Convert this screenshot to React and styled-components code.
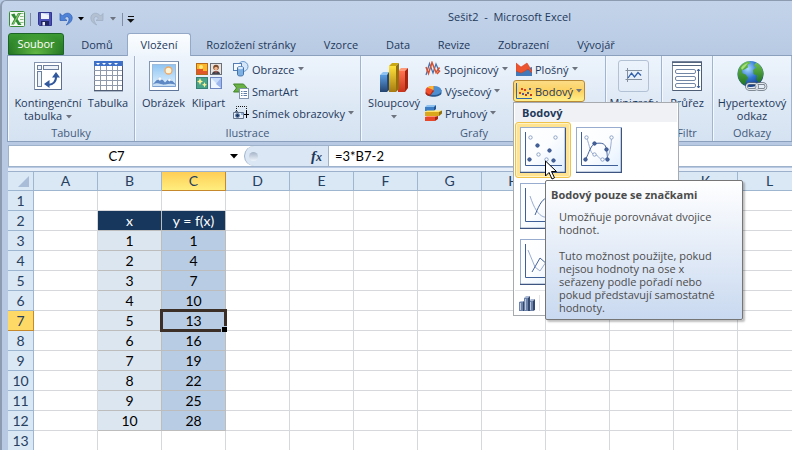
import React from "react";
import styled, { createGlobalStyle, css } from "styled-components";

const GlobalStyle = createGlobalStyle`
  * { box-sizing: border-box; }
  html, body { margin: 0; overflow: hidden; background: #b8cbe4; }
  body, button, input { font-family: "Open Sans", "Noto Sans", sans-serif; font-size: 11px; color: #1e395b; }
  button { border: 0; padding: 0; background: none; }
  svg { display: block; flex: none; }
`;

/* ---------- window ---------- */
const Window = styled.div`
  display: flex;
  flex-direction: column;
  min-height: 100vh;
  padding-left: 5px;
  background: linear-gradient(#c3d4ea, #b8cae3 55px);
  border-top: 1px solid #8d9bb0;
  border-left: 2px solid #8d9bb0;
  border-top-left-radius: 6px;
`;

const TitleBar = styled.header`
  display: grid;
  grid-template-columns: 220px 1fr;
  align-items: center;
  height: 32px;
`;

const QuickAccess = styled.div`
  display: flex;
  align-items: center;
  padding: 4px 0 0 2px;
`;

const QuickButton = styled.button`
  display: flex;
  align-items: center;
  justify-content: center;
  width: ${(p) => p.$w}px;
  height: 20px;
`;

const Divider = styled.span`
  width: 1px;
  height: 13px;
  background: #7f8ea3;
`;

const Title = styled.h1`
  margin: 0;
  padding-bottom: 2px;
  text-align: center;
  font-size: 11px;
  font-weight: 400;
  white-space: pre;
`;

/* ---------- ribbon ---------- */
const Tabs = styled.nav`
  display: flex;
  height: 22px;
  padding-left: 1px;
`;

const Tab = styled.button`
  flex: none;
  width: ${(p) => p.$w}px;
  height: 23px;
  line-height: 22px;
  white-space: nowrap;
  ${(p) =>
    p.$active &&
    css`
      position: relative;
      background: linear-gradient(#fbfdff, #eef5fc);
      border: 1px solid #93a9c7;
      border-bottom: 0;
      border-radius: 3px 3px 0 0;
      line-height: 20px;
    `}
`;

const FileTab = styled(Tab)`
  height: 22px;
  margin-right: 3px;
  color: #fff;
  background: radial-gradient(ellipse at 50% 100%, #63b944, transparent 75%), linear-gradient(#3c9a33, #1f7020);
  border: 1px solid #1c6427;
  border-radius: 3px 3px 0 0;
  line-height: 20px;
`;

const Ribbon = styled.div`
  display: flex;
  height: 87px;
  border: 1px solid #8ba0bd;
  border-right: 0;
  background: linear-gradient(#edf4fc, #dde8f5 60%, #d5e2f1);
`;

const Group = styled.section`
  display: flex;
  flex-direction: column;
  flex: none;
  width: ${(p) => p.$w}px;
  border-right: 1px solid #a2b5d0;
  box-shadow: inset 1px 0 #f4f9ff;
`;

const GroupBody = styled.div`
  display: flex;
  justify-content: ${(p) => (p.$center ? "center" : "flex-start")};
  height: 69px;
  padding-left: ${(p) => (p.$center ? 0 : p.$pad)}px;
`;

const GroupLabel = styled.h2`
  margin: 0;
  padding-right: ${(p) => p.$launcher || 0}px;
  font-size: 11px;
  font-weight: 400;
  line-height: 16px;
  text-align: center;
  color: #445b7c;
`;

const LargeButton = styled.button`
  display: flex;
  flex-direction: column;
  align-items: center;
  flex: none;
  gap: 4px;
  width: ${(p) => p.$w}px;
  padding-top: 4px;
  line-height: 13px;
  white-space: nowrap;
`;

const LabelLines = styled.span`
  white-space: pre;
  text-align: center;
  svg {
    display: inline-block;
    margin-left: ${(p) => (p.$alone ? 0 : 4)}px;
    vertical-align: middle;
  }
`;

const Stack = styled.div`
  display: flex;
  flex-direction: column;
  align-items: flex-start;
  padding-top: 2px;
  width: ${(p) => p.$w}px;
`;

const SmallButton = styled.button`
  display: flex;
  align-items: center;
  gap: 3px;
  height: 22px;
  padding: 0 2px;
  white-space: nowrap;
  border: 1px solid transparent;
  border-radius: 3px;
  ${(p) =>
    p.$open &&
    css`
      background: linear-gradient(#fbdc86, #fdd160 50%, #fff08b);
      border-color: #b88a35;
    `}
`;

const SparkFrame = styled.span`
  display: flex;
  align-items: center;
  justify-content: center;
  width: 31px;
  height: 32px;
  border: 1px solid #b3c1d4;
  border-radius: 3px;
`;

/* ---------- scatter menu ---------- */
const MenuAnchor = styled.div`
  position: relative;
`;

const Menu = styled.div`
  position: absolute;
  z-index: 5;
  top: 22px;
  left: 0;
  width: 166px;
  border: 1px solid #a7abb0;
  background: #fff;
`;

const MenuTitle = styled.h3`
  margin: 0 1px;
  padding-left: 7px;
  background: #f0f1f5;
  font-size: 11px;
  line-height: 19px;
`;

const Gallery = styled.div`
  display: grid;
  grid-template-columns: 56px 56px;
  padding-left: 1px;
`;

const GalleryItem = styled.button`
  display: flex;
  align-items: center;
  justify-content: center;
  height: 56px;
  border-radius: 3px;
  ${(p) =>
    p.$hot &&
    css`
      border: 1px solid #efc24c;
      background: #ffe391;
      box-shadow: inset 0 0 0 1px #fff3c4;
    `}
`;

const MenuFooter = styled.div`
  display: flex;
  align-items: center;
  height: 25px;
  padding-left: 4px;
  margin: 0 1px;
  border-top: 1px solid #e2e4e7;
`;

const FooterIcon = styled.span`
  padding-right: 4px;
  border-right: 1px solid #e2e4e7;
`;

const Pointer = styled.svg`
  position: absolute;
  z-index: 7;
  top: 57px;
  left: 31px;
`;

const Tooltip = styled.div`
  position: absolute;
  z-index: 6;
  top: 77px;
  left: 31px;
  width: 198px;
  padding: 7px 6px 5px 5px;
  border: 1px solid #767676;
  border-radius: 2px;
  background: linear-gradient(#fff, #c9d9f0);
  box-shadow: 2px 2px 2px rgba(0, 0, 0, 0.25);
  color: #4c4c4c;
  line-height: 13px;
`;

const TipTitle = styled.strong`
  display: block;
  margin-bottom: 9px;
  white-space: nowrap;
`;

const TipText = styled.p`
  margin: 0 0 13px;
  padding-left: 8px;
  white-space: pre-line;
  &:last-child { margin-bottom: 0; }
`;

/* ---------- formula bar ---------- */
const FormulaBar = styled.div`
  display: flex;
  height: 22px;
  margin: 3px 0 0 1px;
  border: 1px solid #9fb2cc;
  border-right: 0;
  background: #fff;
`;

const NameBox = styled.label`
  display: flex;
  align-items: center;
  width: 229px;
  background: #fff;
`;

const FieldInput = styled.input`
  flex: 1;
  min-width: 0;
  height: 20px;
  border: 0;
  outline: 0;
  padding: 0 6px;
  background: transparent;
  color: #000;
  font-family: Lato, sans-serif;
  font-size: 13px;
`;

const NameInput = styled(FieldInput)`
  padding-left: 0;
  text-align: center;
`;

const FunctionBar = styled.div`
  display: flex;
  align-items: center;
  justify-content: space-between;
  width: 85px;
  margin-left: 6px;
  padding: 0 6px 0 4px;
  border: 1px solid #9fb2cc;
  border-width: 0 1px 0 1px;
  border-radius: 10px 0 0 10px;
  background: #dbe7f4;
`;

const Grip = styled.span`
  width: 9px;
  height: 9px;
  border-radius: 5px;
  background: linear-gradient(#a5b4c8, #eef4fb);
`;

const FxButton = styled.button`
  font-family: "Liberation Serif", serif;
  font-size: 15px;
  font-style: italic;
  font-weight: 700;
  line-height: 18px;
`;

const Sub = styled.span`
  font-size: 12px;
`;

/* ---------- sheet ---------- */
const SheetArea = styled.main`
  flex: 1;
  margin: 1px 0 0 1px;
  padding-top: 3px;
  overflow: hidden;
  background: #e9f0f9;
`;

const Sheet = styled.table`
  table-layout: fixed;
  width: 794px;
  border-collapse: separate;
  border-spacing: 0;
  border-top: 1px solid #9eb1cc;
  background: #fff;
  font-family: Lato, sans-serif;
  font-size: 14px;
  line-height: 18px;
  text-align: center;
`;

const Col = styled.col`
  width: ${(p) => p.$w}px;
`;

const HeadCell = styled.th`
  height: ${(p) => (p.$top ? 19 : 20)}px;
  padding: 0;
  font-weight: 400;
  color: #26405f;
  background: ${(p) => (p.$on ? (p.$top ? "linear-gradient(#ffce56, #ffee7e)" : "#ffd965") : "#dae7f5")};
  border: 0 solid ${(p) => (p.$on ? "#c68a2c" : "#9eb6d0")};
  border-width: 0 1px 1px 0;
`;

const Corner = styled(HeadCell)`
  svg { margin: 0 0 0 10px; }
`;

const Cell = styled.td`
  position: relative;
  height: 20px;
  padding: 0;
  color: ${(p) => (p.$kind === "head" ? "#fff" : "#000")};
  background: ${(p) => ({ head: "#17375d", light: "#dce6f1", dark: "#b8cce4" })[p.$kind] || "#fff"};
  border: 0 solid ${(p) => (p.$kind ? "#bdbdbd" : "#d6d8db")};
  border-width: 0 1px 1px 0;
`;

const Selection = styled.span`
  position: absolute;
  z-index: 1;
  inset: -2px;
  border: 3px solid #3b2f28;
  &::after {
    content: "";
    position: absolute;
    right: -3px;
    bottom: -3px;
    width: 5px;
    height: 5px;
    background: #000;
    border: solid #b8cce4;
    border-width: 1px 0 0 1px;
  }
`;

/* ---------- icons ---------- */
const Arrow = ({ dark }) => (
  <svg width="6" height="4" viewBox="0 0 6 4" aria-hidden="true">
    <path d="M0 0h6L3 3.6z" fill={dark ? "#000" : "#6d747f"} />
  </svg>
);

const BigArrow = () => (
  <svg width="8" height="5" viewBox="0 0 8 5" aria-hidden="true">
    <path d="M0 0h8L4 4.5z" fill="#000" />
  </svg>
);

const ExcelIcon = () => (
  <svg width="16" height="16" viewBox="0 0 16 16">
    <rect x=".5" y=".5" width="15" height="15" rx="1" fill="#f4faf2" stroke="#3b8a3c" />
    <path d="M11 2.500h3.500M11 5.500h3.500M11 8.500h3.500M11 11.500h3.500" stroke="#8bbf85" />
    <path d="M2 3.500L5.500 2.500 7 5.700 9 2h3L8.500 8l4 6H9L6.800 10.300 5 13.500H2.200L5.300 8z" fill="#2f8a35" />
    <path d="M9.500 2.500h1.500L5 12.800H3.600z" fill="#86c56a" />
  </svg>
);

const SaveIcon = () => (
  <svg width="14" height="14" viewBox="0 0 14 14">
    <path d="M.5.5h13v13h-12l-1-1z" fill="#4a4fb5" stroke="#32378e" />
    <rect x="3" y="1" width="8" height="6" fill="#eef3fc" />
    <path d="M3 1h8v2z" fill="#bccdf0" />
    <rect x="3" y="9" width="8" height="4.500" fill="#20255e" />
    <rect x="4.500" y="10" width="2.500" height="3.500" fill="#e4eaf8" />
  </svg>
);

const UndoIcon = ({ redo }) => (
  <svg width="14" height="14" viewBox="0 0 14 14">
    <g transform={redo ? "translate(14 0) scale(-1 1)" : undefined}>
      <path
        d="M1 1.500v7h7L5.600 6.200c1.500-2.200 4.100-1.900 4.400.6.200 2-.9 4-2.700 6.200 3.700-1.600 6-4.200 5.900-7.400C12.600.6 6.800-.4 3.400 4z"
        fill={redo ? "#b3c0d2" : "#4f83d8"}
        stroke={redo ? "#9dacc2" : "#2d5db5"}
        strokeWidth=".7"
      />
    </g>
  </svg>
);

const CustomizeIcon = () => (
  <svg width="8" height="7" viewBox="0 0 8 7">
    <path d="M1 .5h6" stroke="#111" />
    <path d="M0 3h7.500L3.700 6.700z" fill="#111" />
  </svg>
);

const PivotIcon = () => (
  <svg width="32" height="32" viewBox="0 0 32 32">
    <rect x="2.500" y="2.500" width="27" height="27" fill="#fff" stroke="#8494b0" />
    <path d="M3 29.500h26.500V3" fill="none" stroke="#5c6f92" />
    <g fill="#eef3fa" stroke="#6d7f9e">
      <rect x="5.500" y="5.500" width="4" height="4" />
      <rect x="11.500" y="5.500" width="15" height="4" />
      <rect x="5.500" y="11.500" width="4" height="15" />
    </g>
    <path d="M15 24.500c6 1 9.500-3 9-9" fill="none" stroke="#31579c" strokeWidth="2" />
    <path d="M24 12l4 5.500h-8zM12 24l5.500-4v8z" fill="#31579c" />
  </svg>
);

const TableIcon = () => (
  <svg width="32" height="32" viewBox="0 0 32 32">
    <rect x="2.500" y="2" width="28" height="29" fill="#fff" stroke="#75839a" />
    <rect x="2" y="1" width="29" height="5" fill="#3e70c8" />
    <path d="M4 3h4l-2 2zM10 3h4l-2 2zM16 3h4l-2 2zM22 3h4l-2 2z" fill="#fff" />
    <path d="M8.500 6v25M14.500 6v25M20.500 6v25M25.500 6v25M2 10.500h29M2 15.500h29M2 20.500h29M2 25.500h29" stroke="#8f9bad" />
    <path d="M2 30.500h28.500V6" fill="none" stroke="#4f5c73" />
  </svg>
);

const PictureIcon = () => (
  <svg width="32" height="32" viewBox="0 0 32 32">
    <defs>
      <linearGradient id="sky" x1="0" y1="0" x2="0" y2="1">
        <stop offset="0" stopColor="#8fc4f2" />
        <stop offset="1" stopColor="#e2f3ff" />
      </linearGradient>
    </defs>
    <rect x="1.500" y="1.500" width="29" height="29" fill="#fff" stroke="#8296b5" />
    <path d="M2 30.500h28.500V2" fill="none" stroke="#5f7599" />
    <rect x="4.500" y="4.500" width="23" height="22" fill="url(#sky)" stroke="#9fbbdc" />
    <circle cx="20.500" cy="10.500" r="3.500" fill="#fff4d6" stroke="#f0a964" strokeWidth="1.300" />
    <path d="M5 24l7-7.500 5 6 4.500-4.500 6 6v2.500H5z" fill="#5d88c4" />
    <path d="M12 16.500l3 3.500-2-.5-1 1.500-1.500-1.500-2 .8zM21.500 18l3 3-2-.5-1 1-2-1.500z" fill="#f3f9ff" />
    <path d="M5 24.500c6-3 8 1 12 0s7-1 10 0V26H5z" fill="#c8dff4" />
  </svg>
);

const ClipartIcon = () => (
  <svg width="28" height="32" viewBox="0 0 28 32">
    <rect x="1.500" y="3.500" width="11" height="11" fill="#fbb62a" stroke="#b36a1c" />
    <path d="M2 9h6v2h4v3H2z" fill="#e2572a" /><circle cx="6" cy="7" r="2" fill="#ffea7c" />
    <rect x="15.500" y="3.500" width="11" height="11" fill="#e9e4e0" stroke="#6a6f78" />
    <circle cx="21" cy="7.500" r="2.800" fill="#7a4a2b" /><circle cx="21" cy="8.500" r="1.800" fill="#efb48a" />
    <path d="M17 14c0-4 8-4 8 0z" fill="#3c4350" /><path d="M20 11h2l-1 3z" fill="#d34a30" />
    <rect x="1.500" y="17.500" width="11" height="11" fill="#49a487" stroke="#377f74" />
    <path d="M5 18l1 2.500 2 1-2 1L5 25l-1-2.500-2-1 2-1zM9.500 22l.8 2 1.700.8-1.700.8-.8 2-.8-2-1.700-.8 1.700-.8z" fill="#fff09a" />
    <rect x="15.500" y="17.500" width="11" height="11" fill="#c7dcfb" stroke="#6e86c2" />
    <path d="M16 18l10 10H16z" fill="#eef5ff" /><path d="M26 18l-5 6 5 4z" fill="#9db7ee" />
  </svg>
);

const ShapesIcon = () => (
  <svg width="16" height="16" viewBox="0 0 16 16">
    <circle cx="10" cy="5.500" r="5" fill="#d4e6f8" stroke="#6c9bd0" />
    <rect x=".5" y="2.500" width="8" height="7" fill="#f4f9ff" stroke="#577fb5" />
    <path d="M4.500 7c0-2 6-2 6 0v6.500c0 2-6 2-6 0z" fill="#7fb0e2" stroke="#4273ac" />
    <ellipse cx="7.500" cy="7" rx="2.600" ry="1.200" fill="#d9ebfc" />
  </svg>
);

const SmartArtIcon = () => (
  <svg width="16" height="16" viewBox="0 0 16 16">
    <path d="M.5 1h10l3.500 4-3.500 4H.5l3-4z" fill="#69b045" stroke="#43852a" />
    <rect x="6.500" y="5.500" width="9" height="10" fill="#fff" stroke="#8495ae" />
    <path d="M8 8.500h1.500M8 10.500h1.500M8 12.500h1.500M10.500 8.500H14M10.500 10.500H14M10.500 12.500H14" stroke="#5f7fa8" />
  </svg>
);

const ScreenshotIcon = () => (
  <svg width="16" height="16" viewBox="0 0 16 16">
    <path d="M3.500 6V1.500h10V6" fill="none" stroke="#111" strokeDasharray="1 1" />
    <path d="M13.500 6v7M11 9.500h5" stroke="#000" />
    <path d="M.5 7.500h10v6H.5z" fill="#e4ebf4" stroke="#64748c" />
    <circle cx="4.500" cy="10.500" r="2" fill="#1d3a66" stroke="#6f8bb4" />
    <path d="M8 9h2" stroke="#3b82d0" /><path d="M2 6.500h3" stroke="#64748c" />
  </svg>
);

const ColumnChartIcon = () => (
  <svg width="32" height="32" viewBox="0 0 32 32">
    <defs>
      <linearGradient id="cb" x1="0" y1="0" x2="0" y2="1"><stop offset="0" stopColor="#5c9ee2" /><stop offset="1" stopColor="#24446f" /></linearGradient>
      <linearGradient id="cy" x1="0" y1="0" x2="0" y2="1"><stop offset="0" stopColor="#ffe23b" /><stop offset="1" stopColor="#a67a12" /></linearGradient>
      <linearGradient id="cr" x1="0" y1="0" x2="0" y2="1"><stop offset="0" stopColor="#ff7350" /><stop offset="1" stopColor="#c8341c" /></linearGradient>
    </defs>
    <path d="M2 15h7v17H2z" fill="url(#cb)" /><path d="M2 15l3-3h6l-2 3z" fill="#8fc4f2" /><path d="M9 15l2-3v18l-2 2z" fill="#244a7d" />
    <path d="M20 11h7v21h-7z" fill="url(#cr)" /><path d="M20 11l3-3h7l-3 3z" fill="#ff9b7d" /><path d="M27 11l3-3v20l-3 4z" fill="#a32512" />
    <path d="M11 6h7v26h-7z" fill="url(#cy)" /><path d="M11 6l3-3h7l-3 3z" fill="#c9a712" /><path d="M18 6l3-3v26l-3 3z" fill="#94700c" />
  </svg>
);

const LineChartIcon = () => (
  <svg width="16" height="16" viewBox="0 0 16 16">
    <path d="M1 14L4.500 2.500 8 12l3-9 3 7" fill="none" stroke="#4770ab" strokeWidth="1.200" />
    <path d="M1 6l2.500 6.500L7 1.500l4 10 3.500-5M12 13l3-3.500" fill="none" stroke="#d94f2b" strokeWidth="1.500" />
  </svg>
);

const PieIcon = () => (
  <svg width="17" height="16" viewBox="0 0 17 16">
    <path d="M1 7v3c0 5 15 5 15.500 0V7z" fill="#27588f" />
    <ellipse cx="9" cy="7.500" rx="7.500" ry="4.500" fill="#4d8ed0" />
    <path d="M8 7L.5 8.500v2C2 13 4 13 5 12.800L9 8z" fill="#ae2715" />
    <path d="M8 7L5 11.500C1 10.500 0 8 .8 6 2 3.500 6 2.800 9 3z" fill="#ef4f2c" />
    <path d="M8.500 7V3C5.500 2.800 3.500 3.500 2.500 4.500z" fill="#f7b733" />
  </svg>
);

const BarIcon = () => (
  <svg width="17" height="16" viewBox="0 0 17 16">
    <path d="M0 2l2-2h9l-1 2z" fill="#8dc1f0" /><path d="M0 2h9v4H0z" fill="#3c7dc4" /><path d="M9 2l2-2v4L9 6z" fill="#24538c" />
    <path d="M0 7l2-1.500h15L15 7z" fill="#ffe56e" /><path d="M0 7h14v4H0z" fill="#dba81c" /><path d="M14 7l3-1.500v3L14 11z" fill="#926f12" />
    <path d="M0 12h10v4H0z" fill="#e8472a" /><path d="M0 12l2-1h11l-2 1z" fill="#ff9273" /><path d="M10 12l3-1v3l-3 2z" fill="#a5250f" />
  </svg>
);

const AreaIcon = () => (
  <svg width="16" height="16" viewBox="0 0 16 16">
    <path d="M0 7l4 2 5-5 4 3 3-1v9H0z" fill="#4179ba" />
    <path d="M0 2l5 4 6-4 5 8v2l-4-4-3 2-4 2-5-2z" fill="#ec5530" stroke="#c93a1c" strokeWidth=".5" />
  </svg>
);

const ScatterIcon = () => (
  <svg width="16" height="16" viewBox="0 0 16 16">
    <path d="M.5 0v15.500H16" fill="none" stroke="#3166a8" />
    <path d="M3 9h2v2H3zM8 6h2v2H8zM5 5h2v2H5z" fill="#d9401f" />
    <path d="M6 10h2v2H6zM11 9h2v2h-2zM13 5h2v2h-2z" fill="#4b5f96" />
    <path d="M9 11h2v2H9zM14 11h2v2h-2z" fill="#c9371c" />
  </svg>
);

const SparklineIcon = () => (
  <svg width="18" height="18" viewBox="0 0 18 18">
    <path d="M.5 3.500H17M2.500 1v14M.5 12.500H17" stroke="#85909f" fill="none" />
    <path d="M3 11l3.500-5 3 4L13 5.500l3 3" fill="none" stroke="#2f5ea9" strokeWidth="1.300" />
  </svg>
);

const SlicerIcon = () => (
  <svg width="32" height="32" viewBox="0 0 32 32">
    <rect x="1.500" y="1.500" width="29" height="29" fill="#fff" stroke="#768399" />
    <path d="M1 2.500h30M1 5.500h30" stroke="#53647e" />
    <path d="M2 30.500h28.500V2" fill="none" stroke="#4f5d75" />
    <g fill="#fff" stroke="#7286a6">
      <rect x="4.500" y="9.500" width="20" height="4" rx="1.500" />
      <rect x="4.500" y="16.500" width="20" height="4" rx="1.500" />
      <rect x="4.500" y="23.500" width="20" height="4" rx="1.500" />
    </g>
    <path d="M27.500 9v19M26 11l1.500-2 1.500 2M26 26l1.500 2 1.500-2" fill="none" stroke="#3d5f96" />
  </svg>
);

const GlobeIcon = () => (
  <svg width="32" height="32" viewBox="0 0 32 32">
    <defs>
      <radialGradient id="sea" cx=".4" cy=".3" r=".75"><stop offset="0" stopColor="#a8dcff" /><stop offset=".5" stopColor="#2f73d2" /><stop offset="1" stopColor="#123778" /></radialGradient>
      <linearGradient id="land" x1="0" y1="0" x2="0" y2="1"><stop offset="0" stopColor="#6fc04e" /><stop offset="1" stopColor="#217324" /></linearGradient>
    </defs>
    <circle cx="14.500" cy="14" r="13" fill="url(#sea)" />
    <path d="M3 8C5.500 4 9 1.500 13 1.300l1.500 2-3 1.500.5 2.500-3 2-3 1 .5 3 3.500 1.500 2 3-2 4-1.500 3.500C4 23 1.500 18 1.700 13z" fill="url(#land)" />
    <path d="M20 2.500c4 2 7.300 6 7.500 11-.3 4-2 7-4.500 9l-2.500-3 .5-4-3.500-1.500-.5-4 3-2.500-2-2z" fill="url(#land)" />
    <path d="M5 8c2-3 4-4 7-5l-3 4-3 3z" fill="#a6e07a" />
    <g fill="none" stroke="#5f6a76" strokeWidth="2.600"><rect x="10.500" y="23.500" width="11" height="6" rx="3" /><rect x="20" y="23.500" width="10" height="6" rx="3" /></g>
    <g fill="none" stroke="#dfe5ea" strokeWidth="1.200"><rect x="10.500" y="23.500" width="11" height="6" rx="3" /><rect x="20" y="23.500" width="10" height="6" rx="3" /></g>
  </svg>
);

const Dots = ({ points, open }) =>
  points.map(([x, y]) => (
    <circle key={`${x}-${y}`} cx={x} cy={y} r="1.700" fill={open ? "#fff" : "#46639b"} stroke={open ? "#8fa4c9" : "#36538c"} />
  ));

const galleryArt = {
  markers: (
    <>
      <Dots open points={[[10.5, 10.5], [35.5, 10.5], [18.5, 27.5], [26.5, 32.5]]} />
      <Dots points={[[17.5, 18.5], [29.5, 23.5], [9.5, 32.5], [33.5, 33.5]]} />
    </>
  ),
  smoothMarkers: (
    <>
      <path d="M10.500 10.500C14 19 14 27 18.500 27.500S23 33 26.500 32.500C33 33 35 22 35.500 10.500" fill="none" stroke="#9aadd0" />
      <path d="M9.500 32.500C13 26 15 17 19.500 16.500c7-1 10 0 11 6s.5 7 1.500 10" fill="none" stroke="#46639b" />
      <Dots open points={[[10.5, 10.5], [35.5, 10.5], [18.5, 27.5], [26.5, 32.5]]} />
      <Dots points={[[18.5, 16.5], [30.5, 22.5], [9.5, 32.5], [31.5, 32.5]]} />
    </>
  ),
  smooth: (
    <>
      <path d="M10 13c4 12 8 19 14 21 6 1 10-9 12-22" fill="none" stroke="#9aadd0" />
      <path d="M15 32c5-12 8-17 13-17s6 9 6 18" fill="none" stroke="#46639b" />
    </>
  ),
  straight: (
    <>
      <path d="M8 11l7 17 5 4 6-9 8-10" fill="none" stroke="#9aadd0" />
      <path d="M12 33l8-14 8 7 5 7" fill="none" stroke="#46639b" />
    </>
  ),
};

const GalleryIcon = ({ kind }) => (
  <svg width="46" height="46" viewBox="0 0 46 46">
    <defs>
      <linearGradient id={`paper-${kind}`} x1="0" y1="0" x2="1" y2="1"><stop offset="0" stopColor="#fff" /><stop offset=".5" stopColor="#fbfdff" /><stop offset="1" stopColor="#dfeeff" /></linearGradient>
    </defs>
    <rect x=".5" y=".5" width="45" height="45" fill={`url(#paper-${kind})`} stroke="#98accf" />
    <path d="M0 45.500h45.500V1" fill="none" stroke="#3d5380" strokeWidth="1.500" />
    <path d="M5.500 5v33.500H42" fill="none" stroke="#3f5f98" />
    {galleryArt[kind]}
  </svg>
);

const AllChartsIcon = () => (
  <svg width="16" height="16" viewBox="0 0 16 16">
    <path d="M0 7h4v9H0zM5 3h4v13H5zM10 6h4v10h-4z" fill="#6e83aa" />
    <path d="M0 7l2-1h4l-2 1zM5 3l2-2h4L9 3zM10 6l2-2h4l-2 2z" fill="#a9b8d4" />
    <path d="M4 7l1-1v10H4zM9 3l2-2v15H9zM14 6l2-2v11l-2 1z" fill="#33486f" />
    <path d="M1.500 8v7M6.500 4v11M11.500 7v8" stroke="#b9c7df" />
  </svg>
);

const FormulaMark = () => <>f<Sub>x</Sub></>;

/* ---------- composition ---------- */
const Large = ({ w, icon, label, menu }) => (
  <LargeButton type="button" $w={w}>
    {icon}
    <LabelLines $alone={label.endsWith("\n")}>
      {label}
      {menu && <Arrow />}
    </LabelLines>
  </LargeButton>
);

const Small = ({ icon, children, menu, open }) => (
  <SmallButton type="button" $open={open} aria-expanded={open}>
    {icon}
    <span>{children}</span>
    {menu && <Arrow />}
  </SmallButton>
);

const ScatterMenu = () => (
  <Menu>
    <MenuTitle>Bodový</MenuTitle>
    <Gallery>
      <GalleryItem type="button" $hot aria-label="Bodový pouze se značkami"><GalleryIcon kind="markers" /></GalleryItem>
      <GalleryItem type="button" aria-label="Bodový s vyhlazenými spojnicemi a značkami"><GalleryIcon kind="smoothMarkers" /></GalleryItem>
      <GalleryItem type="button" aria-label="Bodový s vyhlazenými spojnicemi"><GalleryIcon kind="smooth" /></GalleryItem>
      <span />
      <GalleryItem type="button" aria-label="Bodový s rovnými spojnicemi"><GalleryIcon kind="straight" /></GalleryItem>
    </Gallery>
    <MenuFooter><FooterIcon><AllChartsIcon /></FooterIcon></MenuFooter>
    <Pointer width="13" height="20" viewBox="0 0 13 20" aria-hidden="true">
      <path d="M.5 1v15l3.500-3.500 3 6.500 2.500-1.200-3-6.300h5z" fill="#fff" stroke="#000" />
    </Pointer>
    <Tooltip role="tooltip">
      <TipTitle>Bodový pouze se značkami</TipTitle>
      <TipText>{"Umožňuje porovnávat dvojice\nhodnot."}</TipText>
      <TipText>{"Tuto možnost použijte, pokud\nnejsou hodnoty na ose x\nseřazeny podle pořadí nebo\npokud představují samostatné\nhodnoty."}</TipText>
    </Tooltip>
  </Menu>
);

const tabs = [
  ["Domů", 60], ["Vložení", 64], ["Rozložení stránky", 120], ["Vzorce", 60],
  ["Data", 54], ["Revize", 58], ["Zobrazení", 81], ["Vývojář", 64],
];
const columns = "ABCDEFGHIJKL".split("");
const rows = Array.from({ length: 13 }, (_, i) => i + 1);

const cellFor = (col, row) => {
  if ((col !== "B" && col !== "C") || row < 2 || row > 12) return {};
  if (row === 2) return { kind: "head", value: col === "B" ? "x" : "y = f(x)" };
  const x = row - 2;
  return col === "B" ? { kind: "light", value: x } : { kind: "dark", value: 3 * x - 2 };
};

export default function App() {
  return (
    <>
      <GlobalStyle />
      <Window>
        <TitleBar>
          <QuickAccess>
            <QuickButton $w={16} type="button" aria-label="Excel"><ExcelIcon /></QuickButton>
            <QuickButton as="span" $w={10}><Divider /></QuickButton>
            <QuickButton $w={20} type="button" aria-label="Uložit"><SaveIcon /></QuickButton>
            <QuickButton $w={22} type="button" aria-label="Zpět"><UndoIcon /></QuickButton>
            <QuickButton $w={8} type="button" aria-label="Historie"><Arrow dark /></QuickButton>
            <QuickButton $w={24} type="button" aria-label="Znovu"><UndoIcon redo /></QuickButton>
            <QuickButton $w={8} type="button" aria-label="Historie znovu"><Arrow /></QuickButton>
            <QuickButton as="span" $w={10}><Divider /></QuickButton>
            <QuickButton $w={8} type="button" aria-label="Přizpůsobit"><CustomizeIcon /></QuickButton>
          </QuickAccess>
          <Title>{"Sešit2  -  Microsoft Excel"}</Title>
        </TitleBar>

        <Tabs>
          <FileTab type="button" $w={56}>Soubor</FileTab>
          {tabs.map(([name, w]) => (
            <Tab key={name} type="button" $w={w} $active={name === "Vložení"}>{name}</Tab>
          ))}
        </Tabs>

        <Ribbon>
          <Group $w={127}>
            <GroupBody $pad={2}>
              <Large w={76} icon={<PivotIcon />} label={"Kontingenční\ntabulka"} menu />
              <Large w={44} icon={<TableIcon />} label="Tabulka" />
            </GroupBody>
            <GroupLabel>Tabulky</GroupLabel>
          </Group>
          <Group $w={226}>
            <GroupBody $pad={5}>
              <Large w={47} icon={<PictureIcon />} label="Obrázek" />
              <Large w={43} icon={<ClipartIcon />} label="Klipart" />
              <Stack $w={126}>
                <Small icon={<ShapesIcon />} menu>Obrazce</Small>
                <Small icon={<SmartArtIcon />}>SmartArt</Small>
                <Small icon={<ScreenshotIcon />} menu>Snímek obrazovky</Small>
              </Stack>
            </GroupBody>
            <GroupLabel>Ilustrace</GroupLabel>
          </Group>
          <Group $w={245}>
            <GroupBody $pad={5}>
              <Large w={56} icon={<ColumnChartIcon />} label={"Sloupcový\n"} menu />
              <Stack $w={91}>
                <Small icon={<LineChartIcon />} menu>Spojnicový</Small>
                <Small icon={<PieIcon />} menu>Výsečový</Small>
                <Small icon={<BarIcon />} menu>Pruhový</Small>
              </Stack>
              <Stack $w={90}>
                <Small icon={<AreaIcon />} menu>Plošný</Small>
                <MenuAnchor>
                  <Small icon={<ScatterIcon />} menu open>Bodový</Small>
                  <ScatterMenu />
                </MenuAnchor>
              </Stack>
            </GroupBody>
            <GroupLabel $launcher={18}>Grafy</GroupLabel>
          </Group>
          <Group $w={56}>
            <GroupBody $center>
              <Large w={54} icon={<SparkFrame><SparklineIcon /></SparkFrame>} label="Minigrafy" />
            </GroupBody>
          </Group>
          <Group $w={51}>
            <GroupBody $center>
              <Large w={48} icon={<SlicerIcon />} label="Průřez" />
            </GroupBody>
            <GroupLabel>Filtr</GroupLabel>
          </Group>
          <Group $w={79}>
            <GroupBody $center>
              <Large w={78} icon={<GlobeIcon />} label={"Hypertextový\nodkaz"} />
            </GroupBody>
            <GroupLabel>Odkazy</GroupLabel>
          </Group>
        </Ribbon>

        <FormulaBar>
          <NameBox>
            <NameInput aria-label="Pole názvů" defaultValue="C7" />
            <BigArrow />
          </NameBox>
          <FunctionBar>
            <Grip />
            <FxButton type="button" aria-label="Vložit funkci"><FormulaMark /></FxButton>
          </FunctionBar>
          <FieldInput aria-label="Řádek vzorců" defaultValue="=3*B7-2" />
        </FormulaBar>

        <SheetArea>
          <Sheet>
            <colgroup>
              <Col $w={26} />
              {columns.map((c) => <Col key={c} $w={64} />)}
            </colgroup>
            <thead>
              <tr>
                <Corner $top scope="col" aria-label="Vybrat vše">
                  <svg width="11" height="11" viewBox="0 0 11 11"><path d="M11 0v11H0z" fill="#a9bdd8" /></svg>
                </Corner>
                {columns.map((c) => <HeadCell key={c} scope="col" $top $on={c === "C"}>{c}</HeadCell>)}
              </tr>
            </thead>
            <tbody>
              {rows.map((r) => (
                <tr key={r}>
                  <HeadCell scope="row" $on={r === 7}>{r}</HeadCell>
                  {columns.map((c) => {
                    const { kind, value } = cellFor(c, r);
                    return (
                      <Cell key={c} $kind={kind}>
                        {value}
                        {c === "C" && r === 7 && <Selection />}
                      </Cell>
                    );
                  })}
                </tr>
              ))}
            </tbody>
          </Sheet>
        </SheetArea>
      </Window>
    </>
  );
}
